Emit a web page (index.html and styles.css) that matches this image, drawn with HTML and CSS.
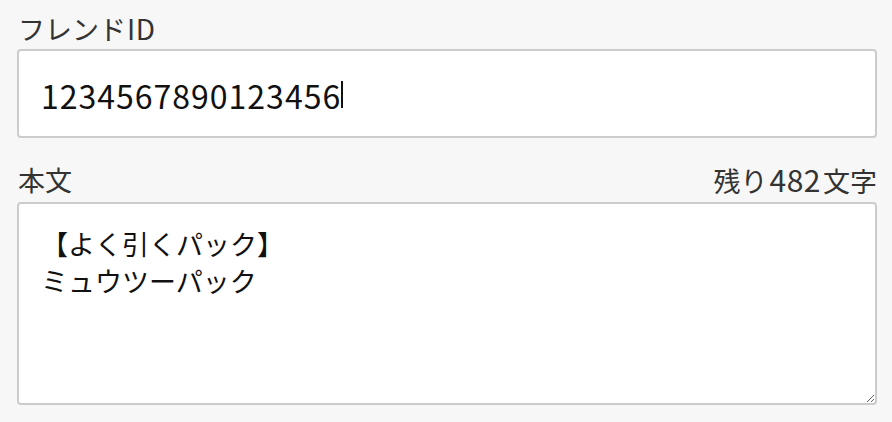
FILE: index.html
```html
<!DOCTYPE html>
<html lang="ja">
<head>
<meta charset="utf-8">
<title>フレンドID</title>
<link rel="stylesheet" href="styles.css">
</head>
<body>
<form class="form">
  <div class="field">
    <div class="label-row"><label class="label" for="fid">フレンド<span class="latin">ID</span></label></div>
    <div class="input" id="fid"><span class="input-text">1234567890123456</span><span class="caret"></span></div>
  </div>
  <div class="field field-body">
    <div class="label-row"><label class="label" for="body">本文</label><span class="counter">残り<span class="num">482</span>文字</span></div>
    <textarea class="textarea" id="body">【よく引くパック】
ミュウツーパック</textarea>
  </div>
</form>
</body>
</html>
```

FILE: styles.css
```css
html, body {
  margin: 0;
  background: #f7f7f7;
}
body {
  font-family: "Noto Sans CJK JP", "Noto Sans", sans-serif;
  color: #333;
}
.form {
  padding: 10px 15px 0 17px;
}
.field {
  display: flex;
  flex-direction: column;
  gap: 3px;
}
.field-body {
  margin-top: 24px;
  gap: 4px;
}
.label-row {
  display: flex;
  justify-content: space-between;
  align-items: center;
  height: 36px;
  font-size: 27px;
  line-height: 36px;
  padding-left: 1px;
}
.label, .counter {
  color: #333;
}
.latin {
  margin-left: 1px;
  font-size: 28px;
  letter-spacing: 0.5px;
}
.num {
  margin: 0 2px 0 2px;
  font-size: 30px;
  letter-spacing: 0.5px;
}
.input {
  box-sizing: border-box;
  height: 89px;
  border: 2px solid #cccccc;
  border-radius: 4px;
  background: #fff;
  display: flex;
  align-items: center;
  padding: 2px 22px 0 22px;
  font-size: 32px;
  color: #111;
}
.input-text {
  letter-spacing: 1px;
}
.caret {
  display: inline-block;
  width: 2px;
  height: 27px;
  background: #111;
}
.textarea {
  display: block;
  box-sizing: border-box;
  width: 100%;
  height: 203px;
  margin: 0;
  border: 2px solid #cccccc;
  border-radius: 4px;
  background: #fff;
  padding: 21px 22px;
  font-family: "Noto Sans CJK JP", sans-serif;
  font-size: 27px;
  line-height: 37px;
  color: #111;
  resize: vertical;
  outline: none;
}
```
